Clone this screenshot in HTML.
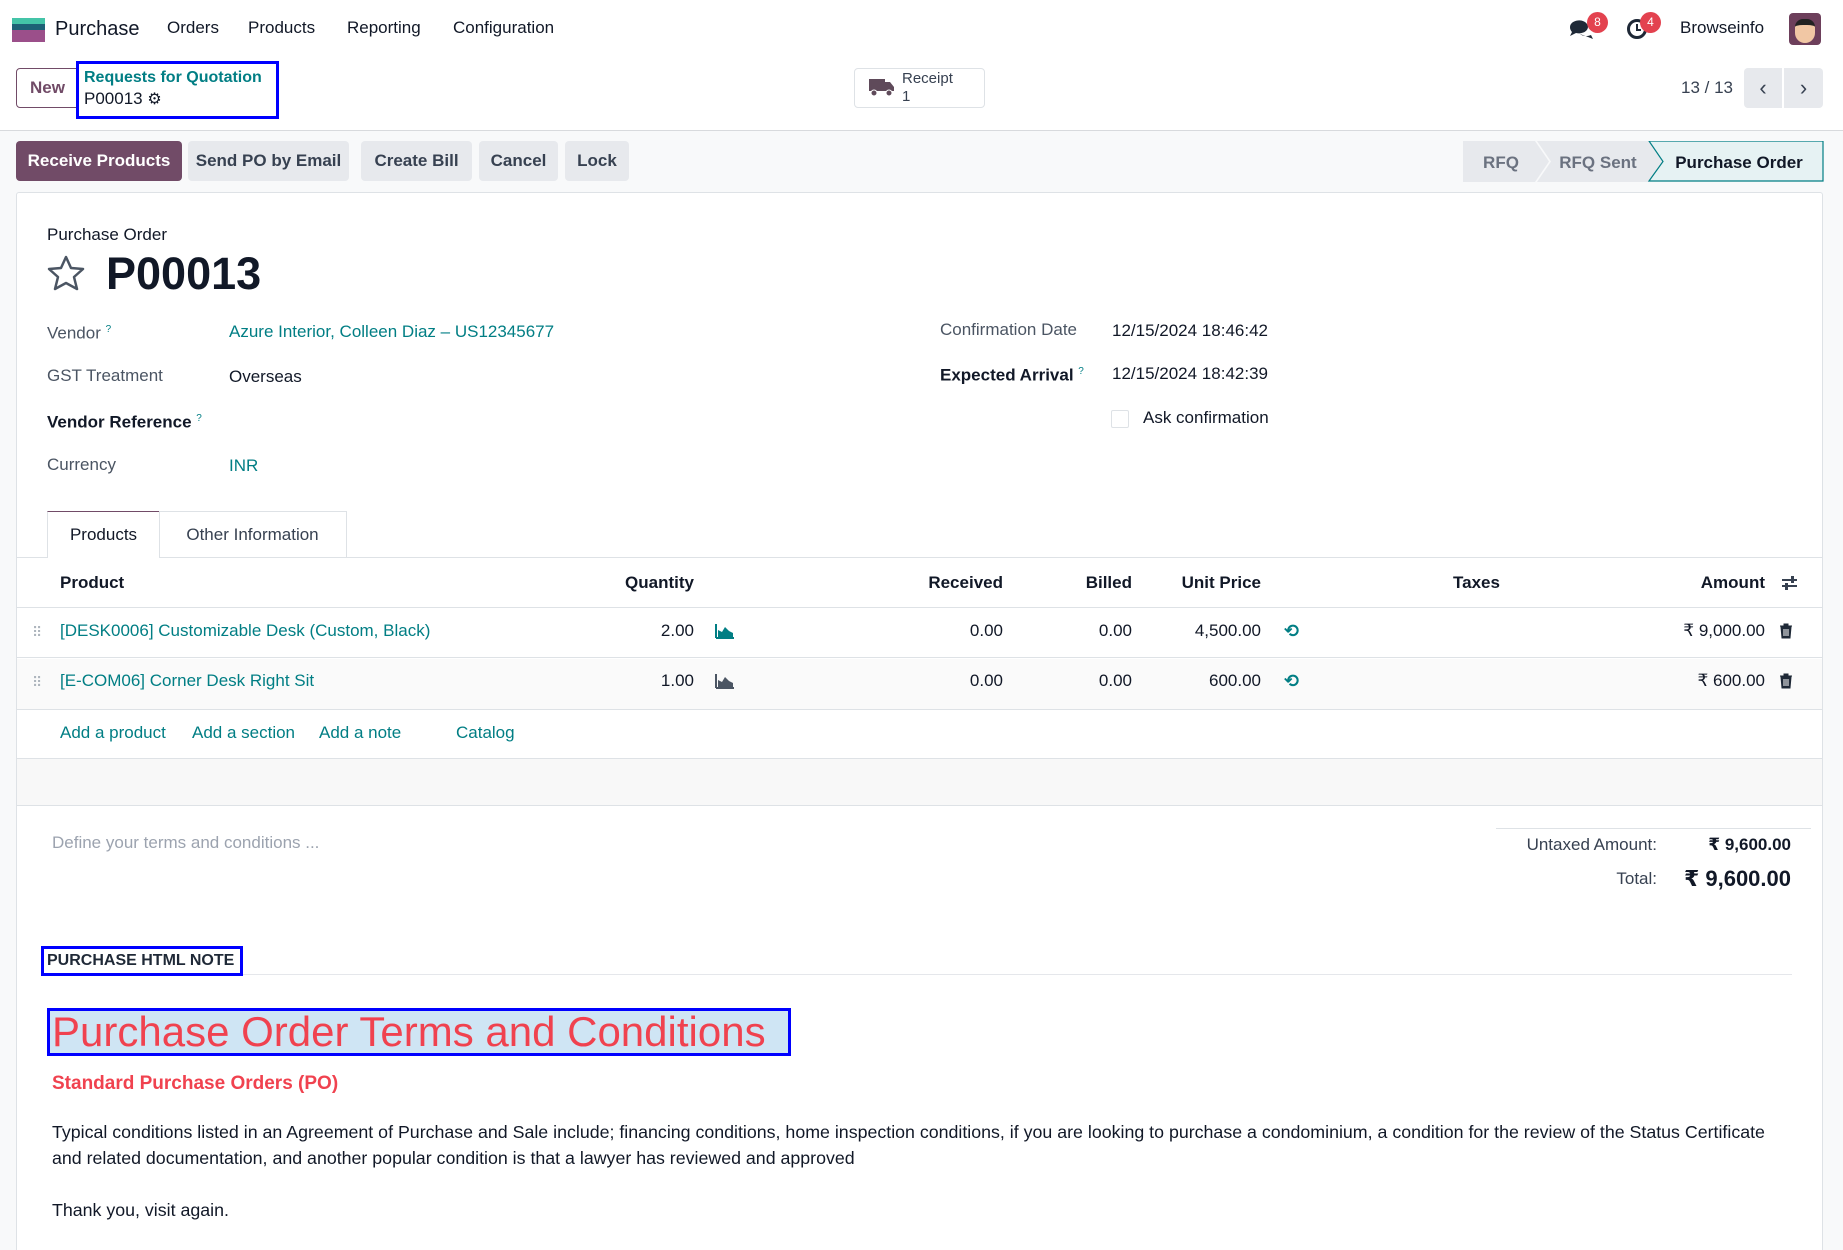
<!DOCTYPE html>
<html style="overflow:hidden;height:1250px"><head><meta charset="utf-8">
<style>
*{box-sizing:border-box;margin:0;padding:0}
body{width:1843px;height:1250px;overflow:hidden;background:#fff;font-family:"Liberation Sans","DejaVu Sans",sans-serif;font-size:17px;color:#374151;position:relative}
.a{position:absolute;white-space:nowrap;line-height:20px}
.t{color:#017e84}
.d{color:#111827}
.b{font-weight:bold}
.btn{position:absolute;top:141px;height:40px;border-radius:4px;background:#e7e9ed;color:#374151;font-size:17px;font-weight:bold;line-height:40px;text-align:center}
.r{text-align:right}
.hl{position:absolute;left:16px;width:1807px;height:1px;background:#dee2e6}
</style></head><body>
<!-- navbar -->
<svg class="a" style="left:12px;top:18px" width="33" height="24"><rect width="33" height="8" fill="#44c4a8"/><rect y="6" width="33" height="6" fill="#1d6176"/><rect y="12" width="33" height="12" fill="#9b4f8a"/></svg>
<div class="a d" style="left:55px;top:18px;font-size:20px;line-height:22px">Purchase</div>
<div class="a d" style="left:167px;top:18px">Orders</div>
<div class="a d" style="left:248px;top:18px">Products</div>
<div class="a d" style="left:347px;top:18px">Reporting</div>
<div class="a d" style="left:453px;top:18px">Configuration</div>
<svg class="a" style="left:1568px;top:18px" width="26" height="22"><path d="M2 9a9 6.5 0 1 1 6 6l-6 3 2-4a7 7 0 0 1-2-5z" fill="#1f2937"/><path d="M12 16a8 5.5 0 0 0 11 1l2 4-5-2" fill="#1f2937"/></svg>
<div class="a" style="left:1587px;top:12px;width:21px;height:21px;border-radius:50%;background:#e3424f;color:#fff;font-size:12px;line-height:21px;text-align:center">8</div>
<svg class="a" style="left:1626px;top:18px" width="22" height="22"><circle cx="11" cy="11" r="8.5" fill="none" stroke="#1f2937" stroke-width="3"/><path d="M11 6v6h4" stroke="#1f2937" stroke-width="2" fill="none"/></svg>
<div class="a" style="left:1640px;top:12px;width:21px;height:21px;border-radius:50%;background:#e3424f;color:#fff;font-size:12px;line-height:21px;text-align:center">4</div>
<div class="a d" style="left:1680px;top:18px">Browseinfo</div>
<div class="a" style="left:1789px;top:13px;width:32px;height:32px;border-radius:4px;background:#6d3f5b;overflow:hidden"><div style="margin:6px auto 0;width:20px;height:24px;background:#f1c7a4;border-radius:8px 8px 10px 10px;border-top:6px solid #222"></div></div>
<!-- control panel -->
<div class="a" style="left:16px;top:68px;width:70px;height:40px;border:1px solid #714b67;border-radius:4px;color:#714b67;font-weight:bold;line-height:38px;padding-left:13px">New</div>
<div class="a" style="left:76px;top:61px;width:203px;height:58px;border:3px solid #0000ff;background:#fff"></div>
<div class="a t b" style="left:84px;top:68px;font-size:16px">Requests for Quotation</div>
<div class="a d" style="left:84px;top:89px;font-size:17px">P00013 <span style="font-size:16px">⚙</span></div>
<div class="a" style="left:854px;top:68px;width:131px;height:40px;border:1px solid #dee2e6;border-radius:4px"></div>
<svg class="a" style="left:869px;top:77px" width="26" height="20"><rect x="0" y="2" width="16" height="12" fill="#5f4a5a"/><path d="M16 5h5l4 5v4H16z" fill="#5f4a5a"/><circle cx="5" cy="16" r="3" fill="#5f4a5a" stroke="#fff"/><circle cx="20" cy="16" r="3" fill="#5f4a5a" stroke="#fff"/></svg>
<div class="a" style="left:902px;top:70px;font-size:15px;line-height:18px;color:#374151">Receipt<br>1</div>
<div class="a" style="left:1681px;top:78px;color:#374151">13 / 13</div>
<div class="a" style="left:1744px;top:68px;width:38px;height:40px;background:#e7e9ed;border-radius:4px 0 0 4px;text-align:center;line-height:40px;font-size:22px">‹</div>
<div class="a" style="left:1784px;top:68px;width:39px;height:40px;background:#e7e9ed;border-radius:0 4px 4px 0;text-align:center;line-height:40px;font-size:22px">›</div>
<div class="a" style="left:0;top:130px;width:1843px;height:1120px;background:#f8f9fa;border-top:1px solid #d8dadd"></div>
<div class="btn" style="left:16px;width:166px;background:#714b67;color:#fff">Receive Products</div>
<div class="btn" style="left:188px;width:161px">Send PO by Email</div>
<div class="btn" style="left:361px;width:111px">Create Bill</div>
<div class="btn" style="left:479px;width:79px">Cancel</div>
<div class="btn" style="left:565px;width:64px">Lock</div>
<!-- status bar -->
<svg class="a" style="left:1463px;top:141px" width="361" height="41">
<path d="M0 0H72L86 20.5 72 41H0z" fill="#e7e9ed"/>
<path d="M74 0H186L200 20.5 186 41H74L88 20.5z" fill="#e7e9ed"/>
<path d="M186 0H360V40H186L200 20.5z" fill="#e6f2f3" stroke="#017e84" stroke-width="1.2"/>
<text x="38" y="27" font-family="Liberation Sans" font-size="17" font-weight="bold" fill="#6b7280" text-anchor="middle">RFQ</text>
<text x="135" y="27" font-family="Liberation Sans" font-size="17" font-weight="bold" fill="#6b7280" text-anchor="middle">RFQ Sent</text>
<text x="276" y="27" font-family="Liberation Sans" font-size="17" font-weight="bold" fill="#111827" text-anchor="middle">Purchase Order</text>
</svg>
<!-- sheet -->
<div class="a" style="left:16px;top:192px;width:1807px;height:1070px;background:#fff;border:1px solid #dee2e6;border-bottom:none;border-radius:3px 3px 0 0"></div>
<div class="a d" style="left:47px;top:225px">Purchase Order</div>
<svg class="a" style="left:46px;top:254px" width="40" height="40"><path d="M20 3l5 11 12 1-9 8 3 12-11-6-11 6 3-12-9-8 12-1z" fill="none" stroke="#4b5563" stroke-width="2.5" stroke-linejoin="round"/></svg>
<div class="a d b" style="left:106px;top:251px;font-size:45px;line-height:46px">P00013</div>
<div class="a" style="left:47px;top:320px;color:#4b5563">Vendor <sup style="font-size:10px;color:#017e84">?</sup></div>
<div class="a t" style="left:229px;top:322px">Azure Interior, Colleen Diaz – US12345677</div>
<div class="a" style="left:47px;top:366px;color:#4b5563">GST Treatment</div>
<div class="a d" style="left:229px;top:367px">Overseas</div>
<div class="a d b" style="left:47px;top:409px">Vendor Reference <sup style="font-size:10px;color:#017e84;font-weight:normal">?</sup></div>
<div class="a" style="left:47px;top:455px;color:#4b5563">Currency</div>
<div class="a t" style="left:229px;top:456px">INR</div>
<div class="a" style="left:940px;top:320px;color:#4b5563">Confirmation Date</div>
<div class="a d" style="left:1112px;top:321px">12/15/2024 18:46:42</div>
<div class="a d b" style="left:940px;top:362px">Expected Arrival <sup style="font-size:10px;color:#017e84;font-weight:normal">?</sup></div>
<div class="a d" style="left:1112px;top:364px">12/15/2024 18:42:39</div>
<div class="a" style="left:1111px;top:410px;width:18px;height:18px;border:1px solid #dee2e6;border-radius:2px"></div>
<div class="a d" style="left:1143px;top:408px">Ask confirmation</div>
<!-- tabs -->
<div class="hl" style="top:557px"></div>
<div class="a" style="left:47px;top:511px;width:113px;height:47px;border:1px solid #dee2e6;border-top:1px solid #714b67;border-bottom:none;background:#fff;color:#111827;text-align:center;line-height:46px">Products</div>
<div class="a" style="left:159px;top:511px;width:188px;height:47px;border:1px solid #dee2e6;border-left:none;border-bottom:none;color:#374151;text-align:center;line-height:46px">Other Information</div>
<!-- table -->
<div class="a d b" style="left:60px;top:573px">Product</div>
<div class="a d b r" style="left:594px;width:100px;top:573px">Quantity</div>
<div class="a d b r" style="left:903px;width:100px;top:573px">Received</div>
<div class="a d b r" style="left:1032px;width:100px;top:573px">Billed</div>
<div class="a d b r" style="left:1141px;width:120px;top:573px">Unit Price</div>
<div class="a d b" style="left:1453px;top:573px">Taxes</div>
<div class="a d b r" style="left:1665px;width:100px;top:573px">Amount</div>
<svg class="a" style="left:1781px;top:574px" width="18" height="18"><path d="M1 6h15M1 12h15" stroke="#374151" stroke-width="2"/><rect x="10" y="2" width="3" height="7" fill="#374151"/><rect x="4" y="9" width="3" height="7" fill="#374151"/></svg>
<div class="hl" style="top:607px"></div>
<div class="a" style="left:17px;top:659px;width:1805px;height:50px;background:#fafafa"></div>
<div class="hl" style="top:657px"></div>
<div class="hl" style="top:709px"></div>
<div class="a" style="left:17px;top:758px;width:1805px;height:47px;background:#f8f8f8"></div>
<div class="hl" style="top:758px"></div>
<div class="hl" style="top:805px"></div>
<div class="a" style="left:32px;top:622px;color:#adb5bd;font-size:14px;letter-spacing:-2px">⠿</div>
<div class="a" style="left:32px;top:672px;color:#adb5bd;font-size:14px;letter-spacing:-2px">⠿</div>
<div class="a t" style="left:60px;top:621px">[DESK0006] Customizable Desk (Custom, Black)</div>
<div class="a t" style="left:60px;top:671px">[E-COM06] Corner Desk Right Sit</div>
<div class="a d r" style="left:594px;width:100px;top:621px">2.00</div>
<div class="a d r" style="left:594px;width:100px;top:671px">1.00</div>
<svg class="a" style="left:715px;top:623px" width="20" height="16"><path d="M1 15V1M1 15h18" stroke="#017e84" stroke-width="2"/><path d="M3 14V7l4 2 3-5 4 4 4 2v4z" fill="#017e84"/></svg>
<svg class="a" style="left:715px;top:673px" width="20" height="16"><path d="M1 15V1M1 15h18" stroke="#4b5563" stroke-width="2"/><path d="M3 14V7l4 2 3-5 4 4 4 2v4z" fill="#4b5563"/></svg>
<div class="a d r" style="left:903px;width:100px;top:621px">0.00</div>
<div class="a d r" style="left:903px;width:100px;top:671px">0.00</div>
<div class="a d r" style="left:1032px;width:100px;top:621px">0.00</div>
<div class="a d r" style="left:1032px;width:100px;top:671px">0.00</div>
<div class="a d r" style="left:1141px;width:120px;top:621px">4,500.00</div>
<div class="a d r" style="left:1141px;width:120px;top:671px">600.00</div>
<div class="a t b" style="left:1284px;top:621px;font-size:18px">⟲</div>
<div class="a t b" style="left:1284px;top:671px;font-size:18px">⟲</div>
<div class="a d r" style="left:1615px;width:150px;top:621px">₹ 9,000.00</div>
<div class="a d r" style="left:1615px;width:150px;top:671px">₹ 600.00</div>
<svg class="a" style="left:1779px;top:623px" width="14" height="16"><path d="M1 3h12M5 3V1h4v2M2 4h10l-1 11H3z" fill="#1f2937" stroke="#1f2937" stroke-width="1"/><path d="M5 6v7M7 6v7M9 6v7" stroke="#fff"/></svg>
<svg class="a" style="left:1779px;top:673px" width="14" height="16"><path d="M1 3h12M5 3V1h4v2M2 4h10l-1 11H3z" fill="#1f2937" stroke="#1f2937" stroke-width="1"/><path d="M5 6v7M7 6v7M9 6v7" stroke="#fff"/></svg>
<div class="a t" style="left:60px;top:723px">Add a product</div>
<div class="a t" style="left:192px;top:723px">Add a section</div>
<div class="a t" style="left:319px;top:723px">Add a note</div>
<div class="a t" style="left:456px;top:723px">Catalog</div>
<!-- totals -->
<div class="a" style="left:52px;top:833px;color:#9ca3af">Define your terms and conditions ...</div>
<div class="a" style="left:1496px;top:828px;width:315px;height:1px;background:#dee2e6"></div>
<div class="a r" style="left:1457px;width:200px;top:835px;color:#374151">Untaxed Amount:</div>
<div class="a d b r" style="left:1641px;width:150px;top:835px">₹ 9,600.00</div>
<div class="a r" style="left:1457px;width:200px;top:869px;color:#374151">Total:</div>
<div class="a d b r" style="left:1591px;width:200px;top:867px;font-size:22px;line-height:24px">₹ 9,600.00</div>
<!-- note -->
<div class="a" style="left:243px;top:974px;width:1549px;height:1px;background:#e5e7eb"></div>
<div class="a" style="left:41px;top:946px;width:202px;height:30px;border:3px solid #0000ff"></div>
<div class="a b" style="left:47px;top:951px;font-size:16px;color:#1f2937">PURCHASE HTML NOTE</div>
<div class="a" style="left:47px;top:1008px;width:744px;height:48px;border:3px solid #0000ff;background:#cfe5f4"></div>
<div class="a" style="left:52px;top:1010px;font-size:42px;line-height:44px;color:#f0424f">Purchase Order Terms and Conditions</div>
<div class="a b" style="left:52px;top:1074px;font-size:19px;color:#f0424f">Standard Purchase Orders (PO)</div>
<div class="a d" style="left:52px;top:1119px;font-size:17.8px;line-height:26px">Typical conditions listed in an Agreement of Purchase and Sale include; financing conditions, home inspection conditions, if you are looking to purchase a condominium, a condition for the review of the Status Certificate<br>and related documentation, and another popular condition is that a lawyer has reviewed and approved</div>
<div class="a d" style="left:52px;top:1200px;font-size:17.8px">Thank you, visit again.</div>
</body></html>
